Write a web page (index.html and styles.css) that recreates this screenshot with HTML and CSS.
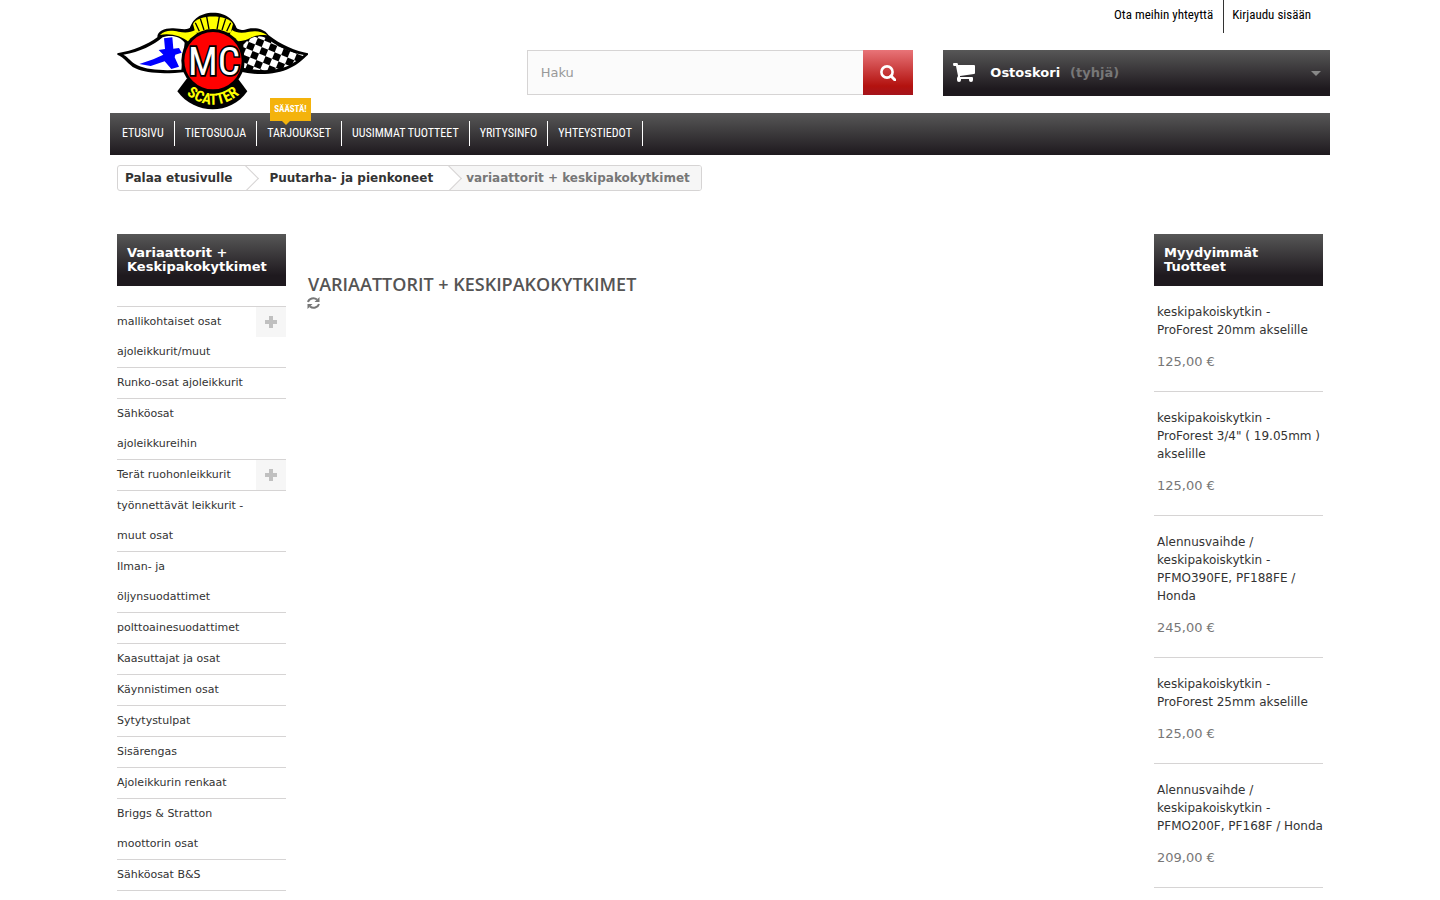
FILE: index.html
```html
<!DOCTYPE html>
<html lang="fi">
<head>
    <meta charset="UTF-8">
    <meta name="viewport" content="width=device-width, initial-scale=1.0">
    <title>variaattorit + keskipakokytkimet - MC Scatter</title>
    <link rel="stylesheet" href="styles.css">
</head>
<body>

<div class="container">
    <header class="header">
        <a href="#" class="logo" aria-label="MC Scatter">
            <svg viewBox="21 36 573 294" width="191" height="98">
                <defs>
                    <pattern id="checks" width="42" height="42" patternUnits="userSpaceOnUse" patternTransform="translate(424 106) rotate(22)">
                        <rect width="42" height="42" fill="#000"/>
                        <path d="M0 0H21V21H0Z M21 21H42V42H21Z" fill="#fff"/>
                    </pattern>
                </defs>
                <!-- wings -->
                <path d="M22 160 C70 152 112 134 142 112 C142 92 165 84 190 85 C215 86 235 94 250 76 L270 130 L226 216 C170 222 110 222 76 205 C54 194 44 172 22 164Z" fill="#000"/>
                <path d="M594 160 C560 154 510 134 476 106 C460 82 430 84 415 86 C395 92 385 92 368 76 L350 130 L390 214 C430 226 500 226 540 204 C565 192 580 176 594 164Z" fill="#000"/>
                <path d="M40 164 C90 156 130 136 158 112 C185 102 212 110 224 128 L214 209 C170 212 115 212 82 196 C62 186 56 172 40 164Z" fill="#fff"/>
                <path d="M162 115 L187 112 L190 146 L207 144 L215 158 L196 164 L194 172 L207 200 L184 207 L164 184 L122 198 L88 192 L130 178 L160 164 L146 150 L165 147Z" fill="#00f"/>
                <path d="M400 134 C425 106 450 102 476 119 C510 144 550 160 582 165 C560 182 545 196 515 204 C480 213 440 212 402 204Z" fill="url(#checks)"/>
                <!-- crown -->
                <path d="M236 104 C238 60 270 38 309 38 C350 38 380 62 384 104Z" fill="#000"/>
                <path d="M150 105 C165 88 190 92 205 95 C225 99 242 98 256 90 L262 104 L236 126 C215 108 180 98 150 105Z" fill="#ff0"/>
                <path d="M472 106 C455 92 435 92 418 95 C398 100 380 100 366 90 L358 104 L384 124 C420 124 425 100 472 106Z" fill="#ff0"/>
                <path d="M256 98 L249 72 C262 42 355 42 369 72 L362 98Z" fill="#ff0"/>
                <path d="M268 94 L256 68 M282 90 L271 56 M297 88 L290 50 M321 88 L328 50 M336 90 L347 56 M350 94 L362 68" stroke="#000" stroke-width="4" fill="none"/>
                <!-- name plate -->
                <path d="M230 236 L202 274 C255 346 362 346 412 274 L384 236Z" fill="#000"/>
                <circle cx="309" cy="182" r="95" fill="#000"/>
                <circle cx="309" cy="182" r="86" fill="#f00"/>
                <text x="312" y="225" text-anchor="middle" class="logo-mc">MC</text>
                <path id="plate" d="M216 272 Q309 356 402 272" fill="none"/>
                <text class="logo-name" text-anchor="middle"><textPath href="#plate" startOffset="50%">SCATTER</textPath></text>
            </svg>
        </a>
        <form class="search" action="#">
            <input type="text" name="search_query" placeholder="Haku" aria-label="Haku">
            <button type="submit" aria-label="Hae">
                <svg viewBox="0 0 16 16" width="16" height="16"><circle cx="7" cy="7" r="5.6" fill="none" stroke="#fff" stroke-width="2.6"/><path d="M11 11 L15 15" stroke="#fff" stroke-width="3" stroke-linecap="round"/></svg>
            </button>
        </form>
        <div class="header-right">
            <nav class="user-links">
                <a href="#">Ota meihin yhteyttä</a>
                <a href="#">Kirjaudu sisään</a>
            </nav>
            <a href="#" class="cart">
                <svg viewBox="0 0 22 20" width="22" height="20" fill="#fff"><path d="M0 1 Q0 0 1 0 H4 Q5 0 5 2 H21 Q22 2 22 3 V10 Q22 11 21 11 L7 13 V14 H19 Q20 14 20 15 V17 Q20 19 18 19 Q16 19 16 17 V16 H8 V17 Q8 19 6 19 Q4 19 4 17 V15 L5 13 L3 3 H1 Q0 3 0 1Z"/></svg>
                <b>Ostoskori</b>
                <span>(tyhjä)</span>
            </a>
        </div>
    </header>

    <nav class="menu">
        <a href="#">Etusivu</a>
        <a href="#">Tietosuoja</a>
        <a href="#">Tarjoukset<span class="badge">Säästä!</span></a>
        <a href="#">Uusimmat tuotteet</a>
        <a href="#">Yritysinfo</a>
        <a href="#">Yhteystiedot</a>
    </nav>

    <div class="breadcrumb">
        <a href="#">Palaa etusivulle</a>
        <a href="#">Puutarha- ja pienkoneet</a>
        <span>variaattorit + keskipakokytkimet</span>
    </div>

    <div class="columns">
        <aside>
            <h2 class="block-title">Variaattorit + Keskipakokytkimet</h2>
            <ul class="categories">
                <li><a href="#">mallikohtaiset osat ajoleikkurit/muut</a><button type="button" class="grower" aria-label="Avaa"></button></li>
                <li><a href="#">Runko-osat ajoleikkurit</a></li>
                <li><a href="#">Sähköosat ajoleikkureihin</a></li>
                <li><a href="#">Terät ruohonleikkurit</a><button type="button" class="grower" aria-label="Avaa"></button></li>
                <li><a href="#">työnnettävät leikkurit - muut osat</a></li>
                <li><a href="#">Ilman- ja öljynsuodattimet</a></li>
                <li><a href="#">polttoainesuodattimet</a></li>
                <li><a href="#">Kaasuttajat ja osat</a></li>
                <li><a href="#">Käynnistimen osat</a></li>
                <li><a href="#">Sytytystulpat</a></li>
                <li><a href="#">Sisärengas</a></li>
                <li><a href="#">Ajoleikkurin renkaat</a></li>
                <li><a href="#">Briggs &amp; Stratton moottorin osat</a></li>
                <li><a href="#">Sähköosat B&amp;S</a></li>
            </ul>
        </aside>

        <main>
            <h1>variaattorit + keskipakokytkimet</h1>
            <svg class="loader" viewBox="0 0 14 14" width="14" height="14"><path d="M1 6 A5.5 5 0 0 1 10 3.5 M12 8 A5.5 5 0 0 1 3 10.5" fill="none" stroke="#777" stroke-width="2"/><path d="M12.5 1 V6 H7.5Z M.5 13 V8 H5.5Z" fill="#777"/></svg>
        </main>

        <aside>
            <h2 class="block-title">Myydyimmät Tuotteet</h2>
            <ul class="products">
                <li><a href="#">keskipakoiskytkin - ProForest 20mm akselille</a><p>125,00 €</p></li>
                <li><a href="#">keskipakoiskytkin - ProForest 3/4" ( 19.05mm ) akselille</a><p>125,00 €</p></li>
                <li><a href="#">Alennusvaihde / keskipakoiskytkin - PFMO390FE, PF188FE / Honda</a><p>245,00 €</p></li>
                <li><a href="#">keskipakoiskytkin - ProForest 25mm akselille</a><p>125,00 €</p></li>
                <li><a href="#">Alennusvaihde / keskipakoiskytkin - PFMO200F, PF168F / Honda</a><p>209,00 €</p></li>
            </ul>
        </aside>
    </div>
</div>

</body>
</html>
```
FILE: styles.css
```css
* {
    box-sizing: border-box;
}
body {
    font-family: "DejaVu Sans", Verdana, sans-serif;
    font-size: 13px;
    line-height: 18px;
    margin: 0;
    color: #777;
    background-color: #fff;
}
a {
    color: #333;
    text-decoration: none;
}
ul {
    list-style: none;
    margin: 0;
    padding: 0;
}
.container {
    max-width: 1220px;
    margin: 0 auto;
}

/* header */
.header {
    display: grid;
    grid-template-columns: 1fr 1fr 1fr;
    column-gap: 30px;
    height: 113px;
}
.logo {
    padding: 12px 0 0 7px;
}
.logo svg {
    display: block;
}
.logo-mc {
    font-family: "Roboto Condensed", "Liberation Sans Narrow", sans-serif;
    font-size: 118px;
    font-weight: 400;
    fill: #fff;
    stroke: #000;
    stroke-width: 10px;
    paint-order: stroke;
}
.logo-name {
    font-family: "Roboto Condensed", "Liberation Sans Narrow", sans-serif;
    font-size: 46px;
    font-weight: bold;
    fill: #ff0;
}
.search {
    display: flex;
    height: 45px;
    margin-top: 50px;
}
.search input {
    flex: 1;
    min-width: 0;
    padding: 0 13px;
    border: 1px solid #d6d4d4;
    border-right: 0;
    background-color: #fbfbfb;
    font: inherit;
}
.search input::placeholder {
    color: #999;
}
.search button {
    display: flex;
    align-items: center;
    justify-content: center;
    width: 50px;
    padding: 0;
    border: 0;
    background: linear-gradient(#e87478, #b3120f 80%, #a5141c);
}
.header-right {
    display: flex;
    flex-direction: column;
}
.user-links {
    display: flex;
    justify-content: flex-end;
    height: 33px;
    margin: 0 11px 17px 0;
    font-family: "Roboto Condensed", "Liberation Sans Narrow", sans-serif;
}
.user-links a {
    padding: 6px 8px 0;
    color: #000;
}
.user-links a + a {
    border-left: 1px solid #333;
}
.user-links a:first-child {
    padding-right: 10px;
}
.cart {
    display: flex;
    align-items: center;
    height: 46px;
    padding: 0 9px 0 10px;
    color: #fff;
    background: linear-gradient(#575757, #1e191e 85%);
}
.cart b {
    margin: 0 10px 0 15px;
}
.cart span {
    color: #777;
    font-weight: bold;
}
.cart::after {
    content: '';
    margin-left: auto;
    border: 5px solid transparent;
    border-top-color: #888;
    border-bottom: 0;
}

/* top menu */
.menu {
    display: flex;
    height: 42px;
    padding: 8px 2px;
    background: linear-gradient(#575757, #1e191e);
    font-family: "Roboto Condensed", "Liberation Sans Narrow", sans-serif;
    font-size: 12px;
    line-height: 25px;
    text-transform: uppercase;
}
.menu a {
    position: relative;
    height: 25px;
    padding: 0 10px;
    border-right: 1px solid #fff;
    color: #fff;
}
.badge {
    position: absolute;
    top: -23px;
    left: 13px;
    padding: 0 4px;
    background-color: #f4b30c;
    font-size: 9px;
    font-weight: bold;
    line-height: 23px;
}
.badge::after {
    content: '';
    position: absolute;
    top: 100%;
    left: 12px;
    border: 4px solid transparent;
    border-top-color: #f4b30c;
    border-bottom: 0;
}

/* breadcrumb */
.breadcrumb {
    display: inline-flex;
    height: 26px;
    margin: 10px 7px 43px;
    border: 1px solid #d6d4d4;
    border-radius: 3px;
    overflow: hidden;
    font-size: 12px;
    font-weight: bold;
    line-height: 24px;
}
.breadcrumb a {
    position: relative;
    padding: 0 16px 0 23px;
}
.breadcrumb a:first-child {
    padding: 0 14px 0 7px;
}
.breadcrumb a::after {
    content: '';
    position: absolute;
    top: 3px;
    right: -9px;
    z-index: 1;
    width: 18px;
    height: 18px;
    border: 1px solid #d6d4d4;
    border-left: 0;
    border-bottom: 0;
    background: linear-gradient(45deg, transparent 50%, #fff 50%);
    transform: rotate(45deg);
}
.breadcrumb span {
    padding: 0 11px 0 17px;
    background-color: #f6f6f6;
}

/* columns */
.columns {
    display: grid;
    grid-template-columns: 169px 1fr 169px;
    column-gap: 21px;
    padding: 0 7px;
}
.block-title {
    margin: 0;
    padding: 12px 10px;
    background: linear-gradient(#575757, #1e191e 80%);
    color: #fff;
    font-size: 13px;
    line-height: 14px;
}
.categories {
    margin-top: 20px;
    border-top: 1px solid #d6d4d4;
    font-size: 11px;
    line-height: 30px;
}
.categories li {
    display: flex;
    align-items: flex-start;
    border-bottom: 1px solid #d6d4d4;
}
.categories a {
    flex: 1;
    margin-right: 30px;
}
.grower {
    width: 30px;
    height: 30px;
    margin-left: -30px;
    border: 0;
    background: linear-gradient(#c0c0c0, #c0c0c0) center / 12px 4px no-repeat,
        linear-gradient(#c0c0c0, #c0c0c0) center / 4px 12px no-repeat,
        #f6f6f6;
}
h1 {
    margin: 38px 1px 0;
    color: #555454;
    font-family: "Open Sans", sans-serif;
    font-size: 18px;
    font-weight: 600;
    line-height: 24px;
    text-transform: uppercase;
}
.loader {
    display: block;
}
.products li {
    padding: 17px 0 20px 3px;
    border-bottom: 1px solid #d6d4d4;
}
.products a {
    display: block;
    font-size: 12px;
}
.products p {
    margin: 14px 0 0;
}
```
